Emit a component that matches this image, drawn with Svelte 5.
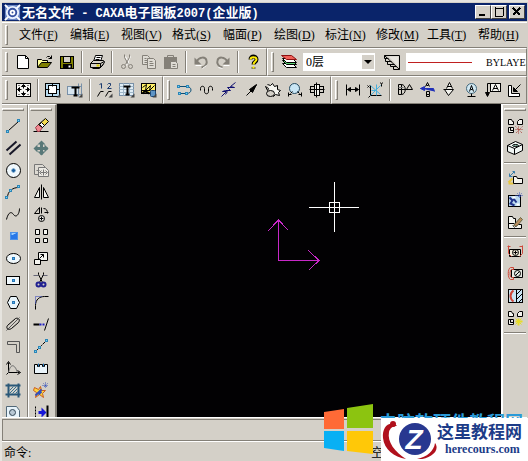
<script>
  const menus = [
    ['文件', 'F'], ['编辑', 'E'], ['视图', 'V'], ['格式', 'S'], ['幅面', 'P'],
    ['绘图', 'D'], ['标注', 'N'], ['修改', 'M'], ['工具', 'T'], ['帮助', 'H'],
  ];

  const node = (x, y) => `<rect x="${x}" y="${y}" width="2" height="2" fill="#7fd0f0" stroke="#2a86b8"/>`;
  const drop = '<path d="M15 11V15H11Z" fill="#444" stroke="none"/>';

  const icons = {
    新建: '<path d="M2 1H10L13 4V14H2Z" fill="#fff"/><path d="M10 1V4H13"/>',
    打开: '<path d="M0 13V5H4L5 6H10V8" fill="#ffff99"/><path d="M0 13L4 8H14L10 13Z" fill="#808000"/><path d="M9 3L10 2H12L14 4M14 1V4H11"/>',
    保存: '<rect x="1" y="2" width="13" height="12" fill="#808000"/><rect x="4" y="2" width="7" height="6" fill="#d4d0c8"/><rect x="4" y="10" width="8" height="4" fill="#000"/><path d="M10 11V13" stroke="#fff" stroke-width="2"/>',
    打印: '<path d="M4 7L6 1H13L11 7Z" fill="#fff"/><path d="M7 3H11M6 5H10" /><path d="M1 9L4 6H14L15 8L11 13H1Z" fill="#d4d0c8"/><path d="M1 9H11L15 7M11 9V13M3 14H10L14 10"/><path d="M7 11H10" stroke="#d8c800" stroke-width="2"/>',
    剪切: '<g stroke="#fff" transform="translate(1 1)"><path d="M5 1L9 10M10 1L6 10"/></g><g stroke="#848078"><path d="M5 0V3L9 10M10 0V3L6 10"/><circle cx="4" cy="12" r="2"/><circle cx="11" cy="12" r="2"/></g>',
    复制: '<g stroke="#848078"><path d="M1 1H6L8 3V10H1Z" fill="#dedbd4"/><path d="M3 4H5M3 6H6M3 8H6"/><path d="M6 4H12L14 6V14H6Z" fill="#dedbd4"/><path d="M8 7H11M8 9H12M8 11H12"/></g>',
    粘贴: '<rect x="1" y="3" width="12" height="11" fill="#848078" stroke="#848078"/><path d="M4 3V1H10V3" stroke="#848078"/><path d="M7 7H12L14 9V14H7Z" fill="#dedbd4" stroke="#848078"/><path d="M9 10H12M9 12H12" stroke="#848078"/>',
    撤销: '<g stroke="#848078" stroke-width="2"><path d="M3 7C6 2 12 2 13 6C14 9 12 12 8 13"/></g><path d="M1 3V10H8Z" fill="#848078" stroke="none"/><path d="M2 11H8M9 14L13 11" stroke="#fff"/>',
    重做: '<g stroke="#848078" stroke-width="2"><path d="M12 7C9 2 3 2 2 6C1 9 3 12 7 13"/></g><path d="M14 3V10H7Z" fill="#848078" stroke="none"/><path d="M8 11H14M3 13L7 14" stroke="#fff"/>',
    帮助主题: '<path d="M5 5C5 1 11 1 11 5C11 8 8 7 8 10M8 13V14" stroke-width="4"/><path d="M5 5C5 2 11 2 11 5C11 7 8 7 8 10M8 12V14" stroke="#ffee00" stroke-width="2"/>',
    层控制: '<path d="M1 9L5 13H15L11 9Z" fill="#fff"/><path d="M1 6L5 10H15L11 6Z" fill="#58d070"/><path d="M1 4L5 8H15L11 4Z" fill="#fff"/><path d="M0 1L5 5H15L10 1Z" fill="#f06058" stroke="#8c1010"/>',
    线型: '<path d="M0 1H15V15ZM0 1V4L4 4M1 4V7H7M3 7V10H10M6 10V12H12M9 12V15H15"/><path d="M4 2H14V12Z" fill="#e8e6e0" stroke="none"/>',
    显示全部: '<rect x="1" y="1" width="14" height="13" fill="#f6f5f1"/><path d="M8 3V6M8 9V12M3 7H6M10 7H13"/><path d="M8 2L10 4H6ZM8 13L10 11H6ZM2 7L4 5V9ZM14 7L12 5V9Z" fill="#000"/><path d="M3 3H4M12 3H13M3 12H4M12 12H13"/>',
    图幅设置: '<rect x="0" y="1" width="14" height="13" fill="#b9dcf0"/><rect x="3" y="3" width="8" height="8" fill="#fff"/><path d="M7 1V4M7 11V14M0 7H4M11 7H14"/>' + drop,
    标题栏: '<path d="M0 4H14M0 8H4M0 12H14M11 1V14M14 1V14" stroke="#7890a8"/><rect x="0" y="4" width="11" height="8" fill="#d7e5ef" stroke="#7890a8"/><path d="M4 5H12M8 5V13M6 13H10" stroke-width="2"/>' + drop,
    序号: '<path d="M2 2L4 1V6M10 2L11 1H13V3L10 6H14" stroke="#1c3c70"/><path d="M0 14L3 9H6M8 14L11 9H14"/>' + drop,
    明细表: '<rect x="0" y="1" width="14" height="12" fill="#e0edf5" stroke="#7890a8"/><path d="M0 4H14M0 7H14M0 10H14M4 1V13M10 1V13" stroke="#9fb6c8"/><path d="M4 4H11M8 4V12M6 12H10" stroke-width="2"/>' + drop,
    查询: '<rect x="0" y="1" width="14" height="10" fill="#fff066"/><path d="M1 5L5 2L4 8L9 3L8 8L13 3M0 8H9" /><path d="M4 9L8 11M1 11L4 8" stroke-width="2"/><rect x="9" y="8" width="5" height="6" rx="1" fill="#5e94c4" stroke="#1c4878"/>' + drop,
    多义线: '<path d="M2 4H9C15 4 15 11 9 11H3" stroke="#0c5078"/>' + node(0, 3) + node(9, 3) + node(8, 10) + node(1, 10),
    波浪线: '<path d="M1 8V6C1 3 5 3 5 6V9C5 12 9 12 9 9V6C9 3 13 3 13 6V8"/>',
    双折线: '<path d="M0 14L5 9H1L4 8H9L6 5H13L9 4L14 0M6 9L4 12" stroke="#101070"/>',
    箭头: '<path d="M3 13L13 3"/><path d="M13 2L6 7L9 10Z" fill="#000"/>',
    齿轮: '<path d="M2 2L5 3L7 1L9 4L12 3L12 7L15 8L13 10L14 13L10 12L8 14L6 12M2 8L3 6L0 4Z" fill="#f4f4ef"/><ellipse cx="5" cy="11" rx="4" ry="3" fill="#d4d0c8"/>',
    圆弧拟合: '<circle cx="7" cy="6" r="5" fill="#c9e6f5" stroke="#254a60"/><path d="M1 10V14M14 10V14M1 12H4M11 12H14M3 11L5 9M12 11L10 9"/>',
    孔轴: '<rect x="1" y="4" width="13" height="6"/><rect x="5" y="2" width="5" height="11" fill="#f4f4ef"/><path d="M0 7H15M7 0V15"/>',
    尺寸标注: '<path d="M1 2V13M14 2V13M2 7H13"/><path d="M2 7L5 5V9ZM13 7L10 5V9Z" fill="#000"/>',
    坐标标注: '<path d="M3 3V13H14M1 15L3 13M0 5L2 3M0 3L2 5M13 0L14 2L15 0M14 2V4" /><path d="M3 3L13 12M9 2V13M3 13L13 3M4 8H9" stroke="#48b0dc"/>',
    倒角标注: '<path d="M1 2H4C9 2 9 12 4 12H1ZM4 2V12M1 7H15M9 7L12 2L15 7"/><path d="M1 5H6" stroke="#777"/>',
    基准代号: '<path d="M6 4L8 0L10 4M7 3H9M7 9V14H10V12H7M7 9H10V12"/><path d="M1 6H14L15 9M1 6L5 4V8Z" stroke="#2030b8" fill="#2030b8"/>',
    粗糙度: '<path d="M3 7L7 13L12 7H2M5 6L8 0L11 6M6 4H10" fill="#f4f4ef"/>',
    形位公差: '<circle cx="8" cy="6" r="5" fill="#d1e8f2" stroke="#43687c"/><path d="M6 9L8 3L10 9M7 7H9M8 11V14M4 14H12"/>',
    引出说明: '<rect x="5" y="1" width="10" height="8" fill="#f4f4ef"/><path d="M5 1H2V13M7 8L10 2L13 8M8 6H12"/><path d="M0 10H4L2 14Z" fill="#000"/>',
    剖切符号: '<path d="M1 3V14H12V11H4V3Z" fill="#fff"/><path d="M7 8L13 2"/><path d="M6 9V5L10 9Z" fill="#000"/>',
    直线: '<path d="M3 12L13 3"/>' + node(1, 12) + node(12, 1),
    平行线: '<path d="M1 10L11 1M4 14L15 4" stroke="#181828" stroke-width="2"/>',
    圆: '<circle cx="8" cy="8" r="7" fill="#f0f8fc"/><path d="M8 6V10M6 8H10" stroke="#1860a0" stroke-width="2"/>',
    圆弧: '<path d="M2 13C2 7 7 3 13 3"/>' + node(0, 12) + node(4, 5) + node(12, 1),
    样条: '<path d="M1 13C3 5 6 5 8 8C11 12 14 7 14 2"/>',
    点: '<rect x="5" y="4" width="7" height="7" fill="#2878e8" stroke="#4b91e8"/><path d="M6 5H10M6 6H8" stroke="#9cd0ff"/>',
    椭圆: '<ellipse cx="8" cy="8" rx="7" ry="5" fill="#f0f8fc"/><rect x="7" y="7" width="2" height="2" fill="#58b0e8" stroke="#2878b8"/>',
    矩形: '<rect x="1" y="4" width="13" height="8" fill="#f0f8fc"/><rect x="7" y="7" width="2" height="2" fill="#58b0e8" stroke="#2878b8"/>',
    正多边形: '<path d="M5 2H11L14 8L11 14H5L2 8Z" fill="#e8f4fa"/><rect x="7" y="7" width="2" height="2" fill="#58b0e8" stroke="#2878b8"/>',
    中心线: '<path d="M2 9L10 2C13 1 15 3 13 6L6 12C3 14 0 12 2 9Z"/><path d="M1 14L14 1" stroke="#555"/>',
    等距线: '<path d="M2 3H14V14M2 6H11V14M2 3V6M11 14H14" stroke="#555"/>',
    公式曲线: '<path d="M3 2V12H14M1 4L3 1L5 4M12 10L15 12L12 14M1 14L3 12"/><path d="M3 12C5 3 9 3 12 12" stroke="#666"/>',
    剖面线: '<path d="M3 1V15M13 1V15M0 3H15M0 12H15" stroke="#2a5878" stroke-width="2"/><path d="M4 8L8 4M4 11L11 4M7 11L12 6M10 11L12 9" stroke="#357090"/>',
    局部放大: '<path d="M1 14V2H11L14 6V15" fill="#e7f3fa" stroke="#516878"/><circle cx="7" cy="8" r="3" fill="#b8c8d4" stroke="#344858"/>',
    删除: '<path d="M0 13H15"/><path d="M2 9L5 6L9 9L6 13H4Z" fill="#f08890" stroke="#a03848"/><path d="M5 6L12 0L15 3L9 9Z" fill="#f4dc50"/><path d="M6 6L9 9L11 7L8 4Z" fill="#fff"/>',
    平移: '<path d="M8 2V14M2 8H14" stroke="#587878" stroke-width="3"/><path d="M8 0L12 4H4ZM8 15L12 11H4ZM0 8L4 4V12ZM15 8L11 4V12Z" fill="#587878" stroke="none"/>',
    平移复制: '<g stroke="#777"><path d="M1 2H9L12 5V12H1Z" fill="#dedbd4"/><path d="M5 5H12L15 8V14H5Z" fill="#eceae4"/><path d="M7 10H13M10 7V13"/><path d="M3 8H6M8 8L6 10L8 12M12 8L14 10L12 12"/></g>',
    镜像: '<path d="M8 0V15"/><path d="M6 3V13H1ZM10 3V13H15Z" fill="#f4f4ef"/>',
    旋转: '<path d="M1 7L6 1V7ZM8 1V7M10 2C13 2 14 4 14 7M11 6H15"/><circle cx="8" cy="12" r="3" fill="#f4f4ef"/><path d="M8 10V14M6 12H10"/>',
    阵列: '<path d="M2 1H6V6H2ZM10 1H14V6H10ZM2 10H6V14H2ZM10 10H14V14H10Z" fill="#f4f4ef"/>',
    比例缩放: '<path d="M5 2H14V10H5Z" fill="#f4f4ef"/><path d="M1 9H7V14H1Z" fill="#f4f4ef"/><path d="M6 8L10 4M7 4H10V7"/>',
    裁剪: '<path d="M0 3H5M9 3H14" stroke="#667"/><path d="M5 0V2L9 10M10 0V2L6 10"/><g stroke="#202090" stroke-width="2"><circle cx="5" cy="12" r="2"/><circle cx="10" cy="12" r="2"/></g>',
    过渡: '<path d="M2 15V11C2 5 6 2 11 2H15" stroke-width="1"/><path d="M2 9V2H9" stroke="#2838b8" stroke-dasharray="1 1"/>',
    齐边: '<path d="M0 8H6" stroke-width="2"/><path d="M6 8H11" stroke="#2020c0" stroke-width="2" stroke-dasharray="2 1"/><path d="M11 14L15 2"/>',
    拉伸: '<path d="M2 13L13 2" stroke-dasharray="4 1"/>' + node(1, 12) + node(5, 8) + node(12, 1),
    打断: '<path d="M1 4H4V6H6V4H9V6H11V4H14V13H1Z" fill="#eaf4fa"/><path d="M5 3V6M10 3V6" stroke="#2878b8"/>',
    打散: '<path d="M1 5L5 7L7 4L8 8L12 8L9 11L10 15L6 12L2 15L3 10L0 8Z" fill="#ffd43a" stroke="#ca5c22"/><path d="M2 13L8 7M5 12L8 9" stroke="#3550bb" stroke-width="2"/><path d="M9 3H15M12 0V6M10 1L14 5M14 1L10 5" stroke="#3550bb" stroke-dasharray="1 1"/>',
    标注编辑: '<path d="M2 2V15" stroke-dasharray="2 1"/><path d="M14 1V15" stroke-width="2"/><path d="M5 8H9" stroke="#1818d8" stroke-width="3"/><path d="M8 3L13 8L8 13Z" fill="#1818d8" stroke="none"/>',
    块生成: '<path d="M1 1H4L5 3H6V6H1ZM10 6V3L12 1H15V6ZM1 9H6V14H1ZM3 9V12H6" fill="#f4f4ef"/><path d="M8 8L15 15M15 8L8 15M11 8V15M8 11H15" stroke="#a84038" stroke-dasharray="1 1"/>',
    提取图符: '<path d="M0 5L8 1L15 4V10L7 14L0 11Z" fill="#f0f5f3"/><path d="M0 5L7 8L15 4M7 8V14"/><ellipse cx="8" cy="5" rx="3" ry="1" fill="#8dbdad"/>',
    驱动图符: '<path d="M2 6L7 1M2 3V6H5M5 1H7V3" stroke="#387ca8"/><path d="M1 12L5 8M1 13H6" stroke="#e6c640" stroke-width="2"/><path d="M6 6H9L10 8H15V13H6Z" fill="#f4f4ef"/>',
    图符更新: '<rect x="1" y="3" width="12" height="11" fill="#bad9ef"/><path d="M2 5L5 8L3 11L7 13M6 6L9 10" stroke="#20338a" stroke-width="2"/><path d="M8 3H15M12 0V6M10 1L14 5M14 1L10 5" stroke="#3550bb" stroke-dasharray="1 1"/><path d="M5 5H8M9 12H12" stroke="#fff" stroke-width="2"/>',
    图库管理: '<path d="M1 2H5L6 4H8V10H14V14H1Z" fill="#f4f4ef"/><path d="M1 9H7"/><path d="M6 11L13 3L15 5L9 12Z" fill="#bd8e5f" stroke="#664"/><path d="M5 11L7 13L9 11" stroke="#555"/>',
    构件库: '<path d="M2 5H13V12H2Z" fill="#f5eddc"/><circle cx="8" cy="8" r="3"/><path d="M6 8H10M8 6V10"/><path d="M1 1V9L4 12M15 1V9L12 12M0 2H3M12 2H15" stroke="#cf493b"/>',
    技术要求: '<path d="M4 3H15V11H4Z" fill="#e8ebe4"/><circle cx="10" cy="7" r="3"/><path d="M8 9L12 5"/><path d="M6 1H3C0 2 0 12 3 13H6V11H4C2 10 2 4 4 3H6Z" stroke="#cf493b" fill="#d4d0c8"/>',
    局部剖视: '<rect x="1" y="1" width="14" height="13" fill="#c9e6f5"/><path d="M6 2C2 5 2 10 6 13" stroke="#cf493b" stroke-width="2"/><path d="M9 1V14M9 6L14 1M9 11L15 5M11 14L15 10"/>',
    块属性: '<path d="M1 1H4L5 3H6V6H1ZM10 6V3L12 1H15V6ZM1 9H6V14H1ZM3 9V12H6" fill="#f4f4ef"/><path d="M11 8V15M8 11H15" stroke="#e6dc28" stroke-width="2"/><path d="M8 8L14 14M14 8L8 14" stroke="#e6dc28"/>',
  };

  const standard = [['新建', '打开', '保存'], ['打印'], ['剪切', '复制', '粘贴'], ['撤销', '重做'], ['帮助主题']];
  const sheets = [['显示全部'], ['图幅设置', '标题栏'], ['序号', '明细表', '查询']];
  const advanced = [['多义线', '波浪线', '双折线', '箭头', '齿轮', '圆弧拟合', '孔轴']];
  const dims = [['尺寸标注', '坐标标注'], ['倒角标注', '基准代号', '粗糙度', '形位公差', '引出说明', '剖切符号']];
  const draw = [['直线', '平行线', '圆', '圆弧', '样条', '点', '椭圆', '矩形', '正多边形', '中心线', '等距线', '公式曲线', '剖面线', '局部放大']];
  const edit = [['删除', '平移', '平移复制', '镜像', '旋转', '阵列', '比例缩放', '裁剪', '过渡', '齐边', '拉伸', '打断', '打散', '标注编辑']];
  const library = [['块生成', '提取图符'], ['驱动图符', '图符更新', '图库管理'], ['构件库', '技术要求', '局部剖视', '块属性']];
</script>

{#snippet icon(name)}
  <svg class="icon" viewBox="-0.5 -0.5 16 16" aria-hidden="true">{@html icons[name]}</svg>
{/snippet}

{#snippet tools(groups)}
  <span class="grip"></span>
  {#each groups as group, i}
    {#if i > 0}<span class="sep"></span>{/if}
    {#each group as name}
      <button class="tool" aria-label={name} title={name}>{@render icon(name)}</button>
    {/each}
  {/each}
{/snippet}

<div class="window">
  <header class="title">
    <svg class="app-icon" viewBox="0 0 18 18" aria-hidden="true">
      <rect x="1" y="1" width="16" height="16" fill="#6a86c4" />
      <path d="M1 1L6 6M17 1L12 6M1 17L6 12M17 17L12 12" stroke="#fff" stroke-width="2" />
      <circle cx="9" cy="9" r="6" fill="#3450a0" stroke="#e8f0ff" stroke-width="2" />
      <circle cx="9" cy="9" r="2" fill="none" stroke="#fff" stroke-width="2" />
    </svg>
    <h1>无名文件<span class="latin">&nbsp;- CAXA</span>电子图板<span class="latin">2007(</span>企业版<span class="latin">)</span></h1>
    <button class="win" aria-label="最小化"><svg viewBox="0 0 12 10"><path d="M2 8H8" stroke="#000" stroke-width="2" /></svg></button>
    <button class="win" aria-label="最大化"><svg viewBox="0 0 12 10"><path d="M2 1H10M2 9H10M2 0V9M10 0V9" stroke="#000" /></svg></button>
    <button class="win close" aria-label="关闭"><svg viewBox="0 0 12 10"><path d="M2 1L9 8M9 1L2 8" stroke="#000" stroke-width="2" /></svg></button>
  </header>

  <nav class="menu">
    <span class="grip"></span>
    {#each menus as [label, key]}
      <button>{label}<span class="key">(<u>{key}</u>)</span></button>
    {/each}
  </nav>

  <div class="row">
    <div class="bar">{@render tools(standard)}</div>
    <div class="bar grow">
      <span class="grip"></span>
      <button class="tool" aria-label="层控制">{@render icon('层控制')}</button>
      <span class="combo">
        <select aria-label="当前层"><option>0层</option></select>
        <svg viewBox="0 0 12 14" aria-hidden="true"><path d="M2 5H10L6 9Z" /></svg>
      </span>
      <button class="tool" aria-label="线型">{@render icon('线型')}</button>
      <span class="line-combo">
        <span class="stroke"></span>
        <select aria-label="当前线型"><option>BYLAYER</option></select>
      </span>
    </div>
  </div>

  <div class="row">
    <div class="bar">{@render tools(sheets)}</div>
    <div class="bar">{@render tools(advanced)}</div>
    <div class="bar grow">{@render tools(dims)}</div>
  </div>

  <main>
    <div class="side">{@render tools(draw)}</div>
    <div class="side second">{@render tools(edit)}</div>
    <div class="canvas">
      <svg width="100%" height="100%" role="img" aria-label="绘图区" fill="none" shape-rendering="crispEdges">
        <g stroke="#c828c8">
          <path d="M221.5 116V156.500H262" />
          <path d="M211 127L221.500 116L231 126M251 146L262 156.500L252 166" />
        </g>
        <path d="M252 103.500H302M277.500 78V128M272.500 98.500H282.500V108.500H272.500Z" stroke="#fff" />
      </svg>
    </div>
    <div class="side right">{@render tools(library)}<span class="sep end"></span></div>
  </main>

  <div class="command"><input id="command" type="text" /></div>
  <footer>
    <label for="command">命令:</label>
    <span class="state">空</span>
  </footer>

  <div class="site">
    <svg class="flag" viewBox="0 0 49 50" aria-hidden="true">
      <path d="M0 8L20 5V25H0Z" fill="#ff6a36" />
      <path d="M23 4L49 0V24H23Z" fill="#8cc410" />
      <path d="M0 27H20V47L0 44Z" fill="#08b0f4" />
      <path d="M23 27H49V50L23 47Z" fill="#ffc808" />
    </svg>
    <span class="site-name">电脑软硬件教程网</span>
  </div>
  <a class="badge" href="#herecours">
    <svg viewBox="0 0 56 43" aria-hidden="true">
      <path d="M15 7C7 3 1 10 2 20C3 31 13 39 25 41C14 34 6 24 8 14C9 10 12 8 16 8Z" fill="#b0101c" />
      <circle cx="12" cy="6" r="3" fill="#b0101c" />
      <path d="M54 25C60 33 48 42 36 41C46 39 53 33 54 25Z" fill="#b0101c" />
      <circle cx="34" cy="21" r="16" fill="#283890" />
      <text x="33" y="31" text-anchor="middle">Z</text>
    </svg>
    <span class="words"><strong>这里教程网</strong><b>herecours.com</b></span>
  </a>
</div>

<style>
  :global(body) { margin: 0; }
  .window {
    position: relative;
    display: flex;
    flex-direction: column;
    box-sizing: border-box;
    height: 100vh;
    padding: 3px 1px 0 2px;
    overflow: hidden;
    background: #d4d0c8;
    box-shadow: inset 2px 2px #e6e4df;
    font: 12px "Liberation Serif", "Noto Sans CJK SC", sans-serif;
    color: #000;
  }
  button, select, input { font: inherit; color: inherit; margin: 0; border-radius: 0; }
  button { padding: 0; border: 0; background: none; }

  .title {
    display: flex;
    flex: none;
    align-items: center;
    height: 18px;
    padding: 0 2px;
    background: #0a246a;
    color: #fff;
  }
  .app-icon { width: 17px; height: 17px; }
  h1 {
    flex: 1;
    margin: 0 0 0 1px;
    font: bold 13px/18px "Noto Sans CJK SC", sans-serif;
    white-space: nowrap;
  }
  .latin { font: bold 12px "Liberation Mono", monospace; }
  .win {
    display: grid;
    place-items: center;
    box-sizing: border-box;
    width: 16px;
    height: 14px;
    background: #d4d0c8;
    border: 1px solid;
    border-color: #fff #404040 #404040 #fff;
  }
  .win svg { width: 12px; height: 10px; fill: none; shape-rendering: crispEdges; }
  .close { margin-left: 2px; }

  .menu {
    display: flex;
    flex: none;
    box-sizing: border-box;
    height: 26px;
    margin-top: 1px;
    border-top: 1px solid #fff;
    border-bottom: 1px solid #848078;
  }
  .menu .grip { margin-right: 7px; }
  .menu button { width: 51px; padding: 0 0 2px 4px; text-align: left; white-space: nowrap; }

  .row { display: flex; flex: none; height: 28px; }
  .bar {
    display: flex;
    align-items: center;
    box-sizing: border-box;
    flex: none;
    padding-right: 2px;
    border: 1px solid;
    border-color: #fff #848078 #848078 #fff;
    border-left-width: 0;
  }
  .bar.grow { flex: 1 1 0; min-width: 0; padding-right: 0; }
  .bar + .bar { border-left-width: 1px; }
  .grip {
    flex: none;
    align-self: center;
    box-sizing: border-box;
    width: 3px;
    height: 20px;
    margin: 0 4px 0 3px;
    border: 1px solid;
    border-color: #fff #848078 #848078 #fff;
  }
  .tool {
    display: grid;
    flex: none;
    place-items: center;
    width: 22px;
    height: 22px;
  }
  .icon {
    width: 16px;
    height: 16px;
    fill: none;
    stroke: #000;
    overflow: hidden;
  }
  .sep {
    flex: none;
    box-sizing: border-box;
    width: 2px;
    height: 22px;
    margin: 0 3px;
    border-left: 1px solid #848078;
    border-right: 1px solid #fff;
  }

  .combo { position: relative; flex: none; width: 72px; height: 18px; margin: 0 6px 0 3px; }
  .combo select {
    appearance: none;
    width: 100%;
    height: 100%;
    padding: 0 16px 0 3px;
    border: 0;
    background: #fff;
  }
  .combo svg {
    position: absolute;
    top: 2px;
    right: 1px;
    width: 12px;
    height: 14px;
    background: #d4d0c8;
    pointer-events: none;
  }
  .line-combo {
    display: flex;
    flex: 1;
    align-items: center;
    min-width: 0;
    height: 18px;
    margin-left: 3px;
    padding-left: 2px;
    overflow: hidden;
    background: #fff;
  }
  .stroke { flex: none; width: 64px; height: 1px; background: #c02020; }
  .line-combo select {
    appearance: none;
    flex: none;
    width: 40px;
    margin-left: auto;
    padding: 0;
    border: 0;
    background: none;
    font-size: 10px;
  }

  main { display: flex; flex: 1; min-height: 0; }
  .side {
    display: flex;
    flex: none;
    flex-direction: column;
    align-items: center;
    box-sizing: border-box;
    width: 26px;
    padding-right: 3px;
    overflow: hidden;
    border-top: 1px solid #fff;
    border-right: 1px solid #848078;
  }
  .second { width: 29px; border-left: 1px solid #fff; border-right: 2px solid #848078; }
  .right { width: 26px; padding: 0; border-left: 2px solid #fff; border-right: 0; }
  .side .grip { width: 22px; height: 3px; margin: 3px 0 4px; }
  .side .sep {
    width: 22px;
    height: 2px;
    margin: 3px 0;
    border: 0;
    border-top: 1px solid #848078;
    border-bottom: 1px solid #fff;
  }
  .canvas { flex: 1; min-width: 0; background: #020103; }
  .canvas svg { display: block; }

  .command { flex: none; height: 24px; padding-top: 1px; border-top: 1px solid #fff; box-sizing: border-box; }
  .command input {
    display: block;
    box-sizing: border-box;
    width: 100%;
    height: 22px;
    border: 1px solid #848078;
    background: #d4d0c8;
  }
  footer {
    display: flex;
    flex: none;
    align-items: center;
    height: 19px;
    padding-left: 2px;
    border-top: 1px solid #fff;
    justify-content: space-between;
  }
  .state { width: 156px; }

  .site { position: absolute; right: 5px; bottom: 7px; display: flex; }
  .flag { width: 49px; height: 50px; margin-right: 6px; }
  .site-name {
    margin-top: 6px;
    font: bold 18px/22px "Noto Sans CJK SC", sans-serif;
    color: #2a9ad8;
    white-space: nowrap;
  }
  .badge {
    position: absolute;
    right: 0;
    bottom: 0;
    display: flex;
    width: 147px;
    height: 43px;
    background: #fff;
    color: #1c3c88;
    text-decoration: none;
  }
  .badge svg { flex: none; width: 56px; height: 43px; }
  .badge text { font: italic bold 28px "Liberation Sans", sans-serif; fill: #fff; }
  .words { display: flex; flex-direction: column; padding-top: 3px; }
  .words strong { font: bold 17px/20px "Noto Sans CJK SC", sans-serif; white-space: nowrap; }
  .words b { padding-left: 8px; font: bold 12px/16px "Liberation Serif", serif; }
</style>
